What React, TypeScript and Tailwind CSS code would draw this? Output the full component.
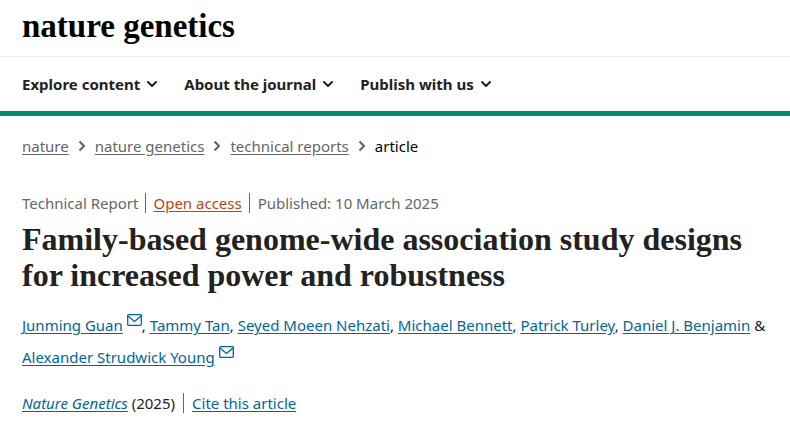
import React from "react";

function ChevronDown() {
  return (
    <svg aria-hidden="true" viewBox="0 0 10 8" className="h-2 w-[10px] shrink-0" fill="none" stroke="currentColor" strokeWidth="2" strokeLinecap="round" strokeLinejoin="round">
      <path d="M1 2 5 6 9 2" />
    </svg>
  );
}

function ChevronRight() {
  return (
    <svg aria-hidden="true" viewBox="0 0 8 12" className="h-3 w-2 shrink-0" fill="none" stroke="#666" strokeWidth="2.200" strokeLinejoin="round">
      <path d="M1.500 1.500 6 6 1.500 10.500" />
    </svg>
  );
}

function Mail() {
  return (
    <svg aria-label="Corresponding author" role="img" viewBox="0 0 15 12" className="ml-1 inline h-3 w-[15px] align-[5px]" fill="none" stroke="#069" strokeWidth="1.300" strokeLinejoin="round">
      <rect x="0.700" y="0.700" width="13.600" height="10.600" rx="0.800" />
      <path d="m1 2 6.500 5.500L14 2" />
    </svg>
  );
}

function Link({ children }: { children: React.ReactNode }) {
  return <a href="#" className="text-[#069] underline underline-offset-2">{children}</a>;
}

const menus = ["Explore content", "About the journal", "Publish with us"];
const crumbs = ["nature", "nature genetics", "technical reports"];
const authors = ["Tammy Tan", "Seyed Moeen Nehzati", "Michael Bennett", "Patrick Turley", "Daniel J. Benjamin"];

export default function App() {
  return (
    <div className="min-h-screen bg-white font-['Noto_Sans','Open_Sans',sans-serif] text-[15px] leading-5 text-[#222]">
      <header className="border-b-5 border-[#018b69]">
        <div className="flex h-14 items-center px-[22px] pb-1">
          <a href="#" className="font-['Liberation_Serif',serif] text-[33px] leading-10 font-bold text-black">nature genetics</a>
        </div>
        <nav aria-label="Journal" className="flex h-[55px] items-center gap-[27px] border-t border-[#eee] px-[22px] font-bold">
          {menus.map((label) => (
            <button key={label} type="button" className="flex items-center gap-[7px]">{label}<ChevronDown /></button>
          ))}
        </nav>
      </header>
      <main className="px-[22px] pb-6">
        <nav aria-label="Breadcrumb" className="flex h-15 items-center gap-[9px] text-[#666]">
          {crumbs.map((label) => (
            <React.Fragment key={label}>
              <a href="#" className="underline underline-offset-2">{label}</a>
              <ChevronRight />
            </React.Fragment>
          ))}
          <span className="text-black">article</span>
        </nav>
        <ul className="mt-[15px] flex h-6 items-center text-[#666]">
          <li className="border-r border-[#666] pr-[7px]">Technical Report</li>
          <li className="border-r border-[#666] px-[7px]">
            <a href="#" className="text-[#b74616] underline underline-offset-2">Open access</a>
          </li>
          <li className="pl-2">Published: <time dateTime="2025-03-10">10 March 2025</time></li>
        </ul>
        <h1 className="mt-[6px] font-['Liberation_Serif',serif] text-[32px] leading-9 font-bold">Family-based genome-wide association study designs for increased power and robustness</h1>
        <p className="mt-4 leading-8">
          <Link>Junming Guan</Link><Mail />,{" "}
          {authors.map((name, i) => (
            <React.Fragment key={name}>
              <Link>{name}</Link>{i < authors.length - 1 ? ", " : " & "}
            </React.Fragment>
          ))}
          <span className="whitespace-nowrap"><Link>Alexander Strudwick Young</Link><Mail /></span>
        </p>
        <div className="mt-5 flex items-center">
          <p className="border-r border-[#666] pr-2"><Link><i>Nature Genetics</i></Link> (2025)</p>
          <p className="pl-2"><Link>Cite this article</Link></p>
        </div>
      </main>
    </div>
  );
}
